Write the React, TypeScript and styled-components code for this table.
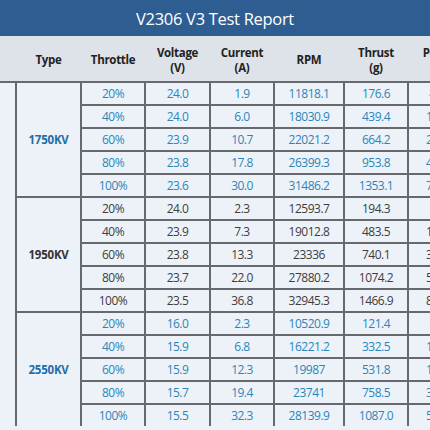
import styled, { createGlobalStyle } from 'styled-components';

const COLS = '15px 63px 62px 63px 62px 68px 62px 62px';

const GlobalStyle = createGlobalStyle`
  html, body {
    margin: 0;
    padding: 0;
    background: #edf2f8;
  }
  body {
    font-family: "Open Sans", "Noto Sans", "Liberation Sans", sans-serif;
  }
`;

const Page = styled.div`
  width: 430px;
  height: 430px;
  overflow: hidden;
  background: #edf2f8;
`;

const TitleBar = styled.div`
  height: 36px;
  background: #2e5d92;
  color: #ffffff;
  display: flex;
  align-items: center;
  justify-content: center;
  font-size: 16.5px;
  letter-spacing: -0.3px;
  width: 430px;
`;

const HeaderRow = styled.div`
  display: grid;
  grid-template-columns: ${COLS};
  column-gap: 2px;
  height: 45px;
  background: #dee3e9;
  width: 480px;
`;

const HeadCell = styled.div`
  display: flex;
  flex-direction: column;
  align-items: center;
  justify-content: center;
  padding-top: 2px;
  font-size: 11.5px;
  font-weight: 700;
  line-height: 15px;
  color: #222;
  letter-spacing: -0.3px;
`;

const Grid = styled.div`
  display: grid;
  grid-template-columns: ${COLS};
  grid-auto-rows: 21px;
  gap: 2px;
  padding-top: 2px;
  background: #666a6e;
  width: 480px;
`;

const Blank = styled.div`
  grid-column: 1;
  grid-row: 1 / span 15;
  background: #edf2f8;
`;

const TypeCell = styled.div<{ $row: number; $blue: boolean }>`
  grid-column: 2;
  grid-row: ${({ $row }) => $row} / span 5;
  background: #edf2f8;
  display: flex;
  align-items: center;
  justify-content: center;
  font-size: 11.5px;
  font-weight: 700;
  letter-spacing: -0.2px;
  color: ${({ $blue }) => ($blue ? '#1f6ea8' : '#333')};
`;

const Cell = styled.div<{ $blue: boolean; $warn?: boolean }>`
  background: #edf2f8;
  display: flex;
  align-items: center;
  justify-content: center;
  font-size: 12px;
  letter-spacing: -0.5px;
  color: ${({ $blue, $warn }) => ($warn ? '#e27b7b' : $blue ? '#2a86b8' : '#3d3d3d')};
  white-space: nowrap;
`;

type Row = [string, string, string, string, string, string];

const groups: { kv: string; blue: boolean; rows: Row[] }[] = [
  {
    kv: '1750KV',
    blue: true,
    rows: [
      ['20%', '24.0', '1.9', '11818.1', '176.6', '45.6'],
      ['40%', '24.0', '6.0', '18030.9', '439.4', '144.0'],
      ['60%', '23.9', '10.7', '22021.2', '664.2', '255.7'],
      ['80%', '23.8', '17.8', '26399.3', '953.8', '423.6'],
      ['100%', '23.6', '30.0', '31486.2', '1353.1', '708.0'],
    ],
  },
  {
    kv: '1950KV',
    blue: false,
    rows: [
      ['20%', '24.0', '2.3', '12593.7', '194.3', '55.2'],
      ['40%', '23.9', '7.3', '19012.8', '483.5', '174.5'],
      ['60%', '23.8', '13.3', '23336', '740.1', '316.5'],
      ['80%', '23.7', '22.0', '27880.2', '1074.2', '521.4'],
      ['100%', '23.5', '36.8', '32945.3', '1466.9', '864.8'],
    ],
  },
  {
    kv: '2550KV',
    blue: true,
    rows: [
      ['20%', '16.0', '2.3', '10520.9', '121.4', '36.8'],
      ['40%', '15.9', '6.8', '16221.2', '332.5', '108.1'],
      ['60%', '15.9', '12.3', '19987', '531.8', '195.6'],
      ['80%', '15.7', '19.4', '23741', '758.5', '304.6'],
      ['100%', '15.5', '32.3', '28139.9', '1087.0', '500.7'],
    ],
  },
];

const headers: [string, string?][] = [
  ['Type'],
  ['Throttle'],
  ['Voltage', '(V)'],
  ['Current', '(A)'],
  ['RPM'],
  ['Thrust', '(g)'],
  ['Power', '(W)'],
];

export default function App() {
  return (
    <Page>
      <GlobalStyle />
      <TitleBar>V2306 V3 Test Report</TitleBar>
      <HeaderRow>
        <div />
        {headers.map(([a, b]) => (
          <HeadCell key={a}>
            <span>{a}</span>
            {b && <span>{b}</span>}
          </HeadCell>
        ))}
      </HeaderRow>
      <Grid>
        <Blank />
        {groups.map((g, gi) => (
          <TypeCell key={g.kv} $row={gi * 5 + 1} $blue={g.blue}>
            {g.kv}
          </TypeCell>
        ))}
        {groups.map((g, gi) =>
          g.rows.map((r, ri) =>
            r.map((v, ci) => (
              <Cell
                key={`${gi}-${ri}-${ci}`}
                $blue={g.blue}
                $warn={gi === 1 && ri === 0 && ci === 5}
                style={{ gridRow: gi * 5 + ri + 1, gridColumn: ci + 3 }}
              >
                {v}
              </Cell>
            ))
          )
        )}
      </Grid>
    </Page>
  );
}
